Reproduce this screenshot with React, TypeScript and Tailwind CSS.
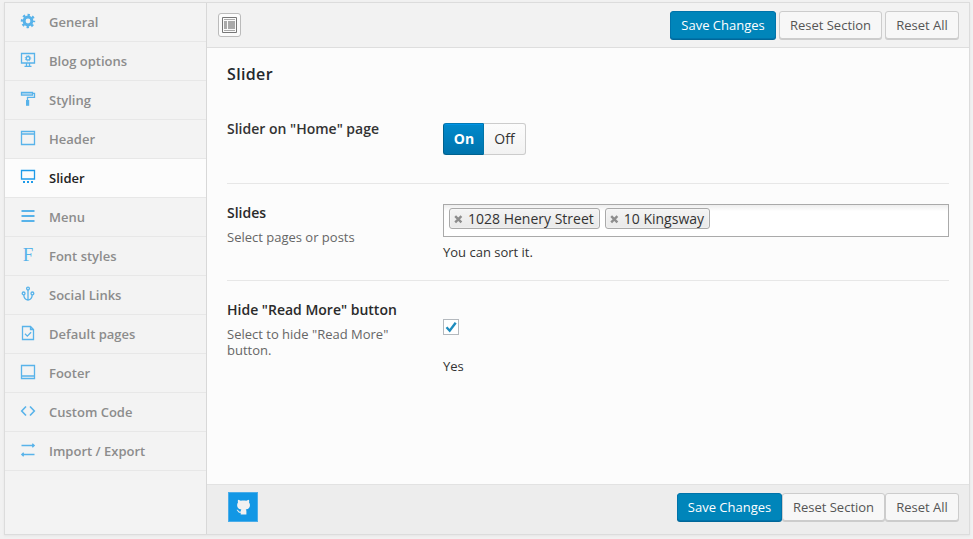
import React from 'react';

const box = { width: 16, height: 16, viewBox: '0 0 16 16', fill: 'none', stroke: 'currentColor', strokeWidth: 1.3 };

const icons: Record<string, React.ReactNode> = {
  General: (
    <svg {...box}>
      <circle cx="8" cy="8" r="3.9" strokeWidth="3" />
      <circle cx="8" cy="8" r="6" strokeWidth="2.4" strokeDasharray="2.35 2.36" strokeDashoffset="1.17" />
    </svg>
  ),
  'Blog options': (
    <svg {...box}>
      <path d="M1.5 1.5h13v9.5h-13zM6.5 11v3M9.5 11v3M4.5 14.3h7" />
      <circle cx="8" cy="6.3" r="1.8" strokeWidth="1.4" />
      <circle cx="8" cy="6.3" r="2.8" strokeDasharray="1.1 1.1" strokeWidth="0.8" />
    </svg>
  ),
  Styling: (
    <svg {...box}>
      <path d="M1.5 1.5h11v2.6h-11z" fill="currentColor" fillOpacity="0.35" />
      <path d="M12.5 2.4h2v4h-7v3" />
      <path d="M7.6 9v5.8" strokeWidth="3.2" />
    </svg>
  ),
  Header: (
    <svg {...box}>
      <path d="M1.5 1.5h13v13h-13zM1.5 4h13" />
    </svg>
  ),
  Slider: (
    <svg {...box}>
      <path d="M1.5 1.5h13v8.500h-13z" />
      <path d="M3 13h2M7 13h2M11 13h2" strokeWidth="2" />
    </svg>
  ),
  Menu: (
    <svg {...box}>
      <path d="M1.5 3h13M1.5 8h13M1.5 13h13" strokeWidth="2.2" />
    </svg>
  ),
  'Font styles': <span className="font-['Liberation_Serif',serif] text-[19px] leading-4 font-normal">F</span>,
  'Social Links': (
    <svg {...box}>
      <circle cx="8" cy="2.6" r="1.4" />
      <circle cx="3.6" cy="7.4" r="1.4" />
      <circle cx="12.4" cy="7.4" r="1.4" />
      <path d="M8 4v10.400M3.800 8.800c0 3 1.700 4.800 4.200 5.400 2.500-.6 4.200-2.400 4.200-5.400" />
    </svg>
  ),
  'Default pages': (
    <svg {...box}>
      <path d="M2.5 1.5h8l3 3v10h-11zM10.5 1.500v3h3M5 8.800l2.300 2.300 3.800-3.800" />
    </svg>
  ),
  Footer: (
    <svg {...box}>
      <path d="M1.5 1.5h13v13h-13zM1.5 12h13" />
    </svg>
  ),
  'Custom Code': (
    <svg {...box}>
      <path d="M6 3.5L1.7 8 6 12.5M10 3.5L14.3 8 10 12.5" strokeWidth="1.6" />
    </svg>
  ),
  'Import / Export': (
    <svg {...box}>
      <path d="M1.5 3.5h12.300M12.300 1.700l1.900 1.800-1.900 1.800M14.500 12.500H2.200M3.700 10.700l-1.900 1.800 1.900 1.800" />
    </svg>
  ),
};

function MenuItem({ label }: { label: string }) {
  const active = label === 'Slider';
  return (
    <li
      className={
        'flex h-[39px] shrink-0 items-center border-b border-[#e7e7e7] pl-[15px] text-[13px] font-semibold ' +
        (active ? 'bg-[#fcfcfc] text-[#222]' : 'text-[#8c8c8c]')
      }
    >
      <span className={'mb-0.5 flex size-4 items-center justify-center ' + (active ? 'text-[#1e9be9]' : 'text-[#58b3ea]')}>
        {icons[label]}
      </span>
      <span className="ml-[13px] pt-0.5">{label}</span>
    </li>
  );
}

function Actions({ footer }: { footer?: boolean }) {
  const plain =
    'h-[28px] rounded-[3px] border border-[#ccc] bg-[#f7f7f7] pt-0.5 text-[13px] text-[#555] shadow-[0_1px_0_#ccc]';
  return (
    <div className={'flex ' + (footer ? 'gap-0' : 'gap-[3px]')}>
      <button
        className={
          'h-[28px] rounded-[3px] border border-[#0073aa] bg-[#0085ba] pt-0.5 text-[13px] text-white shadow-[0_1px_0_#006799] ' +
          (footer ? 'w-[105px]' : 'w-[106px]')
        }
      >
        Save Changes
      </button>
      <button className={plain + ' w-[103px]'}>Reset Section</button>
      <button className={plain + ' w-[74px]'}>Reset All</button>
    </div>
  );
}

function Tag({ label }: { label: string }) {
  return (
    <span className="flex h-[21px] items-center rounded-[3px] border border-[#aaa] bg-linear-to-b from-[#f4f4f4] to-[#e9e9e9] pr-[5px] pl-1 text-[14px] text-[#333] shadow-[inset_0_0_2px_#fff]">
      <svg width="9" height="9" viewBox="0 0 9 9" className="mt-[2px] mr-[5px] text-[#8d8d8d]">
        <path d="M1.2 1.2l6.2 6.2M7.4 1.2L1.2 7.4" stroke="currentColor" strokeWidth="2.4" />
      </svg>
      {label}
    </span>
  );
}

export default function App() {
  return (
    <div className="h-[539px] w-[973px] overflow-hidden bg-[#f1f1f1] pt-0.5 pl-1 font-['Open_Sans',sans-serif]">
      <div className="flex h-[533px] w-[966px] border border-[#dcdcdc] bg-[#f3f3f3] shadow-[0_1px_2px_#e5e5e5]">
        <ul className="flex w-[202px] shrink-0 flex-col border-r border-[#d8d8d8]">
          {Object.keys(icons).map((label) => (
            <MenuItem key={label} label={label} />
          ))}
        </ul>
        <main className="flex flex-1 flex-col bg-[#fcfcfc]">
          <header className="flex h-[45px] shrink-0 items-start justify-between border-b border-[#dedede] bg-[#f2f2f2] pt-2 pr-[10px] pl-[11px]">
            <button className="mt-[2px] flex h-6 w-[23px] items-center justify-center rounded-[3px] border border-[#bbb] bg-[#fbfbfb]">
              <svg width="15" height="16" viewBox="0 0 15 16" fill="none">
                <path d="M.5 .5h14v15H.5z" stroke="#777" />
                <path d="M2 2.5h11M2 13.5h11" stroke="#aaa" />
                <path d="M2 4h3v8H2zM6 4h7v8H6z" fill="#aaa" />
              </svg>
            </button>
            <Actions />
          </header>
          <section className="flex-1 px-5">
            <h2 className="pt-[14px] text-[16px] leading-6 font-semibold tracking-[0.35px] text-[#23282d]">Slider</h2>
            <div className="flex h-[98px] border-b border-[#e7e7e7] pt-[33px]">
              <h3 className="w-[216px] text-[14px] leading-5 font-semibold text-[#333]">Slider on "Home" page</h3>
              <div className="mt-1 flex h-8 text-[14px]">
                <button className="w-[41px] rounded-l-[3px] border border-[#00628f] border-t-[#0079b5] border-r-[#0074a8] bg-linear-to-b from-[#0089cc] to-[#0074ad] pb-0.5 pl-px font-bold text-white shadow-[inset_0_1px_0_#0093e5]">
                  On
                </button>
                <button className="w-[42px] rounded-r-[3px] border border-l-0 border-[#ccc] bg-linear-to-b from-[#fcfcfc] to-[#f2f2f2] pb-0.5 text-[#333]">
                  Off
                </button>
              </div>
            </div>
            <div className="flex h-[97px] border-b border-[#e7e7e7] pt-[19px]">
              <div className="w-[216px] shrink-0">
                <h3 className="text-[14px] leading-5 font-semibold text-[#2a2a2a]">Slides</h3>
                <p className="mt-[6px] text-[13px] leading-4 text-[#666]">Select pages or posts</p>
              </div>
              <div className="flex-1">
                <div className="mt-px flex h-[33px] gap-[5px] border border-[#aaa] bg-linear-to-b from-[#eee] to-white to-20% px-[5px] pt-[3px]">
                  <Tag label="1028 Henery Street" />
                  <Tag label="10 Kingsway" />
                </div>
                <p className="mt-[7px] text-[13px] leading-4 text-[#333]">You can sort it.</p>
              </div>
            </div>
            <div className="flex pt-[19px]">
              <div className="w-[216px] shrink-0 pr-10">
                <h3 className="text-[14px] leading-5 font-semibold whitespace-nowrap text-[#2a2a2a]">Hide "Read More" button</h3>
                <p className="mt-[6px] text-[13px] leading-4 text-[#666]">Select to hide "Read More" button.</p>
              </div>
              <div>
                <div className="mt-[19px] flex size-4 items-center justify-center border border-[#b4b9be] bg-white">
                  <svg width="12" height="12" viewBox="0 0 12 12" fill="none">
                    <path d="M1.5 6.3l3.2 3.4L10.7 1.8" stroke="#1e8cbe" strokeWidth="2.4" />
                  </svg>
                </div>
                <p className="mt-[23px] text-[13px] leading-4 text-[#333]">Yes</p>
              </div>
            </div>
          </section>
          <footer className="flex h-[50px] shrink-0 justify-between border-t border-[#e2e2e2] bg-[#ededed] pt-2 pr-[10px] pl-[21px]">
            <span className="-mt-px flex size-[30px] items-center justify-center border border-[#4bade9] bg-[#1297e5] text-[#f1f1f1]">
              <svg width="15" height="18" viewBox="0 0 16 18" fill="currentColor">
                <path d="M2.2 1.2c1.2.1 2.2.7 2.9 1.2 1.9-.4 3.9-.4 5.8 0 .7-.5 1.7-1.1 2.9-1.2.4 1 .3 2 .1 2.9.7.8 1 1.8 1 3 0 3-1.9 4.3-4.5 4.6.5.5.7 1.2.7 2V17H5v-2c-2 .3-2.7-.6-3.2-1.6-.3-.6-.7-.9-1.2-1.3 1-.4 1.8.3 2.3 1.1.5.7 1.1 1 2.1.7 0-.9.2-1.7.7-2.2C3.1 11.4 1.2 10.1 1.2 7.1c0-1.2.3-2.2.9-3-.2-.9-.3-1.9.1-2.9z" />
              </svg>
            </span>
            <Actions footer />
          </footer>
        </main>
      </div>
    </div>
  );
}
